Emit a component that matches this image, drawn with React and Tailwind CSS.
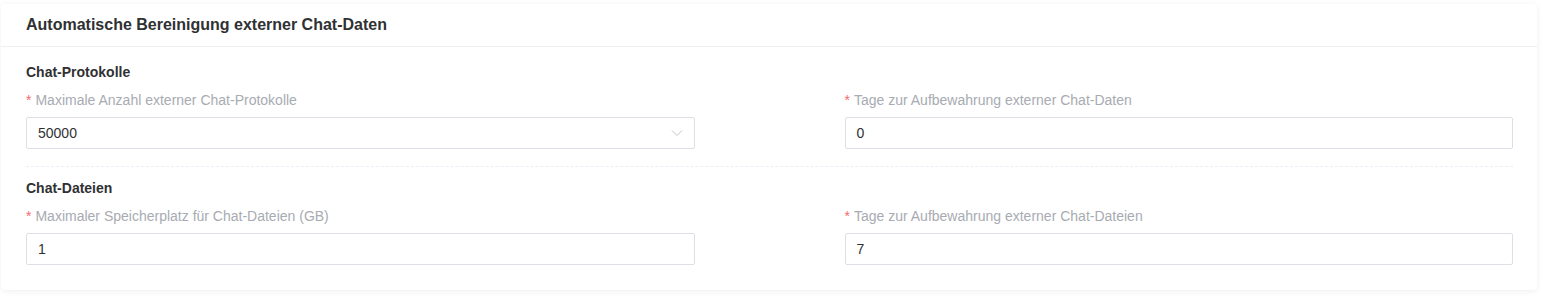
import React from "react";

const SECTIONS = [
  {
    title: "Chat-Protokolle",
    fields: [
      { label: "Maximale Anzahl externer Chat-Protokolle", value: "50000", select: true },
      { label: "Tage zur Aufbewahrung externer Chat-Daten", value: "0" },
    ],
  },
  {
    title: "Chat-Dateien",
    fields: [
      { label: "Maximaler Speicherplatz für Chat-Dateien (GB)", value: "1" },
      { label: "Tage zur Aufbewahrung externer Chat-Dateien", value: "7" },
    ],
  },
];

function Field({ label, value, select }) {
  return (
    <div>
      <div className="h-[18px] flex items-center text-[14px] leading-[18px] text-[#a8abb2]">
        <span className="text-[#f56c6c] mr-[4px]">*</span>
        {label}
      </div>
      <div className="mt-[8px] h-[32px] flex items-center justify-between border border-[#dcdfe6] rounded-[2px] bg-white px-[11px]">
        <span className="text-[14px] text-[#303133]">{value}</span>
        {select && (
          <svg width="12" height="12" viewBox="0 0 12 12" fill="none">
            <path d="M1 3.5 6 8.5 11 3.5" stroke="#c0c4cc" strokeWidth="1" />
          </svg>
        )}
      </div>
    </div>
  );
}

export default function App() {
  return (
    <div className="w-[1551px] h-[301px] bg-white pt-[4px] pl-[1px] font-['Liberation_Sans',Arial,sans-serif]">
      <div className="w-[1536px] rounded-[4px] bg-white shadow-[0_1px_6px_rgba(0,0,0,0.07)]">
        <div className="h-[43px] flex items-center px-[25px] border-b border-[#eeeff2]">
          <h2 className="text-[16px] font-bold text-[#303133] -mt-[1px]">
            Automatische Bereinigung externer Chat-Daten
          </h2>
        </div>

        <div className="pl-[25px] pr-[24px] pt-[16px] pb-[25px]">
          {SECTIONS.map((section, i) => (
            <div key={section.title}>
              {i > 0 && <div className="mt-[17px] mb-[12px] border-t border-dashed border-[#ebeef5]" />}
              <div className="h-[18px] flex items-center text-[14px] font-bold text-[#303133]">
                {section.title}
              </div>
              <div className="mt-[10px] grid grid-cols-2 gap-x-[150px]">
                {section.fields.map((f) => (
                  <Field key={f.label} {...f} />
                ))}
              </div>
            </div>
          ))}
        </div>
      </div>
    </div>
  );
}
